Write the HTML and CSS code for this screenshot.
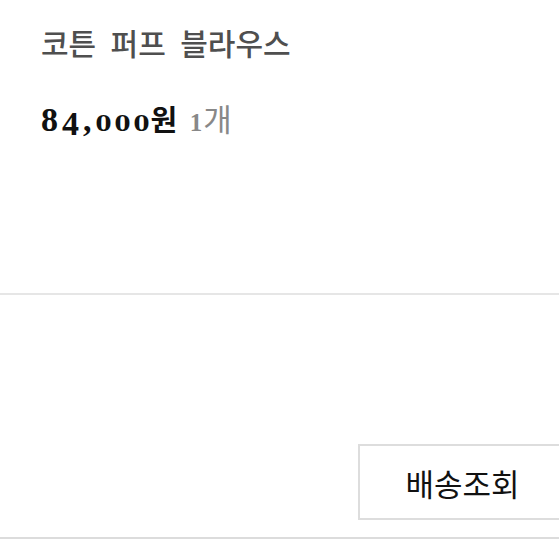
FILE: index.html
```html
<!DOCTYPE html>
<html lang="ko">
<head>
<meta charset="utf-8">
<link rel="stylesheet" href="styles.css">
</head>
<body>
<div class="page">
  <section class="item">
    <h2 class="title">코튼 퍼프 블라우스</h2>
    <p class="price"><span class="num"><span class="hi">8</span><span class="lo">4</span><span class="comma">,</span><span class="x">000</span></span><span class="won">원</span> <span class="qty"><span class="one">1</span>개</span></p>
  </section>
  <div class="actions">
    <button class="btn" type="button">배송조회</button>
  </div>
</div>
</body>
</html>
```
FILE: styles.css
```css
html, body {
  margin: 0;
  padding: 0;
  background: #fff;
  overflow: hidden;
}
.page {
  width: 559px;
  overflow: hidden;
}
.item {
  height: 295px;
  padding: 22px 0 0 41px;
  box-sizing: border-box;
  border-bottom: 2px solid #e6e6e6;
}
.title {
  margin: 0;
  font: 500 30px/40px "Noto Sans CJK KR", sans-serif;
  color: #4f4f4f;
  word-spacing: 6px;
}
.price {
  margin: 33px 0 0;
  font: 700 34px/40px "Liberation Serif", "Noto Sans CJK KR", serif;
  color: #111;
}
.num {
  letter-spacing: 4px;
}
.lo {
  position: relative;
  top: 4px;
}
.comma {
  letter-spacing: 4px;
}
.x {
  font: 700 23px "DejaVu Serif", serif;
  letter-spacing: 3px;
}
.won {
  font: 700 29px "Noto Sans CJK KR", sans-serif;
  margin-left: -2px;
}
.qty {
  font: 400 31px "Noto Sans CJK KR", sans-serif;
  color: #888;
  margin-left: 4px;
}
.qty .one {
  font: 700 25px "Liberation Serif", serif;
  margin-right: 1px;
}
.actions {
  height: 244px;
  box-sizing: border-box;
  padding: 149px 0 0 358px;
  border-bottom: 2px solid #dcdcdc;
}
.btn {
  display: block;
  width: 209px;
  height: 76px;
  box-sizing: border-box;
  border: 2px solid #dddddd;
  background: #fff;
  font: 400 31px/1 "Noto Sans CJK KR", sans-serif;
  color: #111;
  padding: 0;
  margin: 0;
}
```
